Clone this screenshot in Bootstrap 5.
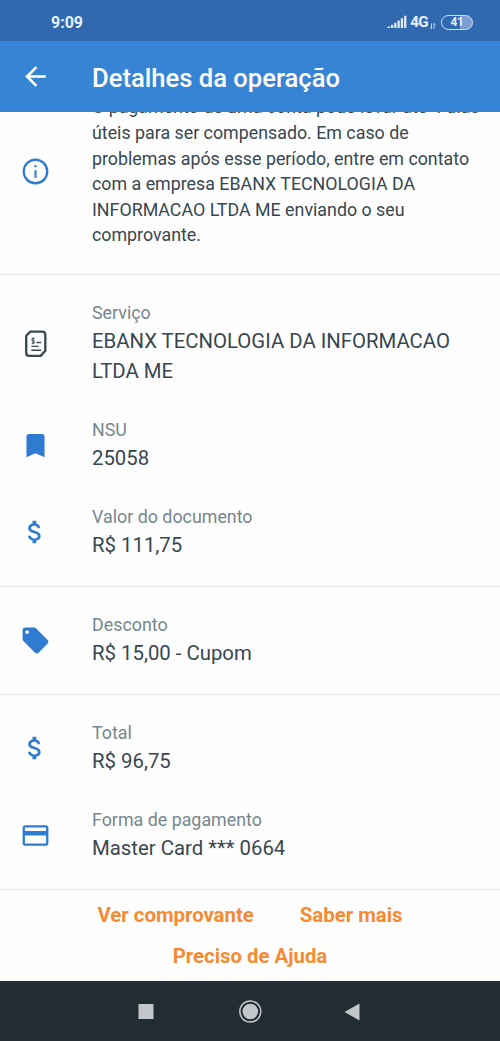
<!DOCTYPE html>
<html lang="pt-BR">
<head>
<meta charset="utf-8">
<meta name="viewport" content="width=device-width, initial-scale=1">
<title>Detalhes da operação</title>
<link href="https://cdn.jsdelivr.net/npm/bootstrap@5.3.0/dist/css/bootstrap.min.css" rel="stylesheet">
<style>
body{font-family:Roboto,"Liberation Sans",sans-serif;color:#37474f;background:#fefefe;height:1041px;overflow:hidden}
svg{display:block;flex:none}
.status-bar{height:41px;background:#3169b1;color:#e6f0fc;padding:4px 27px 0 51px;font-weight:700}
.clock{font-size:16px}
.net{font-size:15.2px;letter-spacing:-.6px;margin-left:3px}
.data-arrows{margin:3px 0 0 2px}
.batt{font-size:12px;width:32px;height:15px;border:1.5px solid #cfe0f5;border-radius:8px;background:linear-gradient(90deg,transparent 60%,#7d9dd2 60%);line-height:13px;margin-left:5px;letter-spacing:-.3px}
.app-bar{height:71px;background:#3884d4;color:#fff}
.app-bar h1{font-size:25.6px;font-weight:500;line-height:30px;padding-top:3px}
.icon-col{width:92px;padding-left:20px;flex:none;color:#2f7bd1}
.notice{height:163px;padding-bottom:26px}
.notice p{font-size:17.82px;line-height:25.6px;width:392px}
.rule{border-bottom:1px solid #e4e6e7}
.group{padding:25px 0 26px;gap:31px;border-bottom:1px solid #e4e6e7}
.lbl{font-size:17.85px;line-height:25px;margin-bottom:1px;color:#76868e}
.val{font-size:20.35px;line-height:30px}
.actions{height:91px;padding-top:5px}
.actions .btn{font-size:20.35px;font-weight:700;line-height:41px;color:#f58a33}
.actions-row{gap:46px}
.nav-keys{height:60px;background:#212d32}
</style>
</head>
<body class="d-flex flex-column">
<div class="status-bar d-flex align-items-center justify-content-between">
  <span class="clock">9:09</span>
  <div class="d-flex align-items-center">
    <svg width="20" height="14" viewBox="0 0 20 14" fill="#dfeafa"><path d="M.5 11.500h2.500V13H.5zM3.900 9.800h2.300V13H3.900zM7.200 7.800h2.300V13H7.200zM10.500 5.500h2.300V13h-2.300zM13.800 3.200h2.300V13h-2.300zM17.100.8h2.300V13h-2.300z"/></svg>
    <span class="net">4G</span>
    <svg class="data-arrows" width="6" height="14" viewBox="0 0 6 14" fill="none" stroke="#c7daf3"><path d="M1.500 6.500V12M.2 10.700l1.300 1.300M4 12V6.500l1.300 1.300"/></svg>
    <span class="batt text-center">41</span>
  </div>
</div>
<header class="app-bar d-flex align-items-center">
  <div class="icon-col text-white"><svg width="31" height="31" viewBox="0 0 24 24" fill="currentColor"><path d="M20 11H7.830l5.590-5.590L12 4l-8 8 8 8 1.410-1.410L7.830 13H20z"/></svg></div>
  <h1 class="m-0">Detalhes da operação</h1>
</header>
<main>
  <section class="notice rule d-flex flex-column justify-content-end overflow-hidden">
    <div class="d-flex align-items-center">
      <div class="icon-col"><svg width="31" height="31" viewBox="0 0 24 24" fill="currentColor"><path d="M11.200 7h1.600v1.700h-1.600zm0 4h1.600v6h-1.600zM12 2a10 10 0 1 0 0 20 10 10 0 0 0 0-20zm0 18.200a8.200 8.200 0 1 1 0-16.400 8.200 8.200 0 0 1 0 16.400z"/></svg></div>
      <p class="m-0">O pagamento de uma conta pode levar até 4 dias<br>úteis para ser compensado. Em caso de<br>problemas após esse período, entre em contato<br>com a empresa EBANX TECNOLOGIA DA<br>INFORMACAO LTDA ME enviando o seu<br>comprovante.</p>
    </div>
  </section>
  <section class="group d-flex flex-column">
    <div class="d-flex align-items-center">
      <div class="icon-col"><svg width="31" height="31" viewBox="0 0 30 30" fill="none" stroke="#3b4a51"><path stroke-width="2.300" d="M10 3.500H21.500q3 0 3 3v15.500L20 27H9q-3 0-3-3V7.500z" stroke-linejoin="round"/><path stroke-width="1.400" d="M16 14h4.500M11 17.800h7M11 21.500h9.500"/><path stroke-width=".9" d="M14 10.200h-2.400v2.200h2.100v2.300h-2.400M12.700 9v6.800"/></svg></div>
      <div><div class="lbl">Serviço</div><div class="val">EBANX TECNOLOGIA DA INFORMACAO<br>LTDA ME</div></div>
    </div>
    <div class="d-flex align-items-center">
      <div class="icon-col"><svg width="31" height="31" viewBox="0 0 24 24" fill="currentColor"><path d="M17 3H7a2 2 0 0 0-2 2v16l7-3 7 3V5a2 2 0 0 0-2-2z"/></svg></div>
      <div><div class="lbl">NSU</div><div class="val">25058</div></div>
    </div>
    <div class="d-flex align-items-center">
      <div class="icon-col"><svg width="30" height="30" viewBox="0 0 24 24" fill="currentColor"><path d="M11.800 10.900c-2.270-.59-3-1.200-3-2.150 0-1.090 1.010-1.850 2.700-1.850 1.780 0 2.440.85 2.500 2.100h2.210c-.07-1.720-1.120-3.300-3.210-3.810V3h-3v2.160c-1.940.42-3.500 1.680-3.500 3.610 0 2.310 1.910 3.460 4.700 4.130 2.500.6 3 1.480 3 2.410 0 .69-.49 1.790-2.700 1.790-2.060 0-2.870-.92-2.980-2.100h-2.200c.12 2.190 1.760 3.420 3.680 3.830V21h3v-2.150c1.950-.37 3.500-1.500 3.500-3.550 0-2.840-2.430-3.810-4.700-4.400z"/></svg></div>
      <div><div class="lbl">Valor do documento</div><div class="val">R$ 111,75</div></div>
    </div>
  </section>
  <section class="group d-flex flex-column">
    <div class="d-flex align-items-center">
      <div class="icon-col"><svg width="31" height="31" viewBox="0 0 24 24" fill="currentColor"><path d="M21.410 11.580l-9-9C12.050 2.220 11.550 2 11 2H4c-1.100 0-2 .9-2 2v7c0 .55.220 1.050.590 1.420l9 9c.36.36.860.580 1.410.580s1.050-.22 1.410-.59l7-7c.37-.36.590-.86.590-1.410s-.23-1.060-.59-1.420zM5.500 7A1.500 1.500 0 1 1 5.500 4a1.500 1.500 0 0 1 0 3z"/></svg></div>
      <div><div class="lbl">Desconto</div><div class="val">R$ 15,00 - Cupom</div></div>
    </div>
  </section>
  <section class="group d-flex flex-column">
    <div class="d-flex align-items-center">
      <div class="icon-col"><svg width="30" height="30" viewBox="0 0 24 24" fill="currentColor"><path d="M11.800 10.900c-2.270-.59-3-1.200-3-2.150 0-1.090 1.010-1.850 2.700-1.850 1.780 0 2.440.85 2.500 2.100h2.210c-.07-1.720-1.120-3.300-3.210-3.810V3h-3v2.160c-1.940.42-3.500 1.680-3.500 3.610 0 2.310 1.910 3.460 4.700 4.130 2.500.6 3 1.480 3 2.410 0 .69-.49 1.790-2.700 1.790-2.060 0-2.870-.92-2.980-2.100h-2.200c.12 2.190 1.760 3.420 3.680 3.830V21h3v-2.150c1.950-.37 3.500-1.500 3.500-3.550 0-2.840-2.430-3.810-4.700-4.400z"/></svg></div>
      <div><div class="lbl">Total</div><div class="val">R$ 96,75</div></div>
    </div>
    <div class="d-flex align-items-center">
      <div class="icon-col"><svg width="31" height="31" viewBox="0 0 24 24" fill="currentColor"><path d="M20 4H4c-1.110 0-1.990.89-1.990 2L2 18c0 1.110.89 2 2 2h16c1.110 0 2-.89 2-2V6c0-1.110-.89-2-2-2zm.2 14.200H3.800V12h16.400v6.200zm0-9.700H3.800V5.800h16.400v2.700z"/></svg></div>
      <div><div class="lbl">Forma de pagamento</div><div class="val">Master Card *** 0664</div></div>
    </div>
  </section>
</main>
<div class="actions">
  <div class="actions-row d-flex justify-content-center">
    <a class="btn border-0 p-0" href="#">Ver comprovante</a>
    <a class="btn border-0 p-0" href="#">Saber mais</a>
  </div>
  <div class="text-center"><a class="btn border-0 p-0" href="#">Preciso de Ajuda</a></div>
</div>
<footer class="nav-keys">
  <svg width="500" height="60" viewBox="0 1 500 60" fill="#c3c7cb"><path d="M138.500 24h15v15h-15zM359.500 23.500v17l-15-8.500z"/><circle cx="250.300" cy="31.500" r="7.800"/><circle cx="250.300" cy="31.500" r="10.500" fill="none" stroke="#c3c7cb" stroke-width="1.500"/></svg>
</footer>
</body>
</html>
